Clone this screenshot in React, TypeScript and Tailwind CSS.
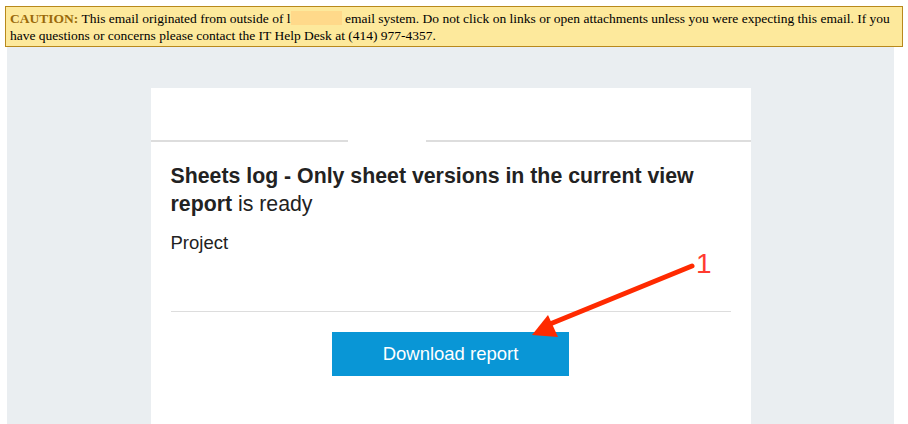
export default function App() {
  return (
    <div className="relative min-h-[424px] w-[908px] overflow-hidden bg-white">
      <div className="pt-[6px] pl-[5px] pr-[5px]">
        <div
          className="border border-[#b8891c] bg-[#fde99c] px-[4px] py-[2px] text-[13.5px] leading-[17px] whitespace-nowrap text-black"
          style={{ fontFamily: '"Liberation Serif", "Times New Roman", serif' }}
        >
          <b className="text-[#9a6a0a]">CAUTION:</b> This email originated from outside of{" "}
          <span>l</span>
          <span className="inline-block h-[14px] w-[51px] translate-y-[2px] bg-[#ffd98a]" />{" "}
          email system. Do not click on links or open attachments unless you were expecting this
          email. If you
          <br />
          have questions or concerns please contact the IT Help Desk at (414) 977-4357.
        </div>
      </div>

      <div className="ml-[7px] mr-[14px] min-h-[377px] bg-[#eaeef1] pt-[41px]">
        <div
          className="mx-auto min-h-[336px] w-[600px] bg-white"
          style={{ fontFamily: '"Liberation Sans", Arial, sans-serif' }}
        >
          <div className="flex h-[54px] items-end">
            <div className="h-[2px] w-[197px] bg-[#dddddd]" />
            <div className="h-[2px] w-[78px] bg-white" />
            <div className="h-[2px] flex-1 bg-[#dddddd]" />
          </div>
          <div className="px-[20px] pt-[20px]">
            <p className="text-[21.3px] leading-[28px] text-[#222]">
              <b>Sheets log - Only sheet versions in the current view report</b> is ready
            </p>
            <p className="mt-[14px] text-[18.5px] leading-[22px] text-[#222]">Project</p>
            <div className="mt-[57px] h-px bg-[#dddddd]" />
            <div className="flex justify-center pt-[20px]">
              <div className="flex h-[44px] w-[237px] items-center justify-center bg-[#0996d6] text-[18.5px] text-white">
                Download report
              </div>
            </div>
          </div>
        </div>
      </div>

      <svg className="absolute left-0 top-0" width="908" height="424" viewBox="0 0 908 424">
        <line x1="692" y1="266" x2="550" y2="324" stroke="#ff2a00" strokeWidth="5" strokeLinecap="round" />
        <polygon points="532,335 548,315 558,337" fill="#ff2a00" />
      </svg>
      <div
        className="absolute left-[696px] top-[248px] text-[28px] leading-[32px] text-[#ff3b30]"
        style={{ fontFamily: '"Liberation Sans", Arial, sans-serif' }}
      >
        1
      </div>
    </div>
  );
}
